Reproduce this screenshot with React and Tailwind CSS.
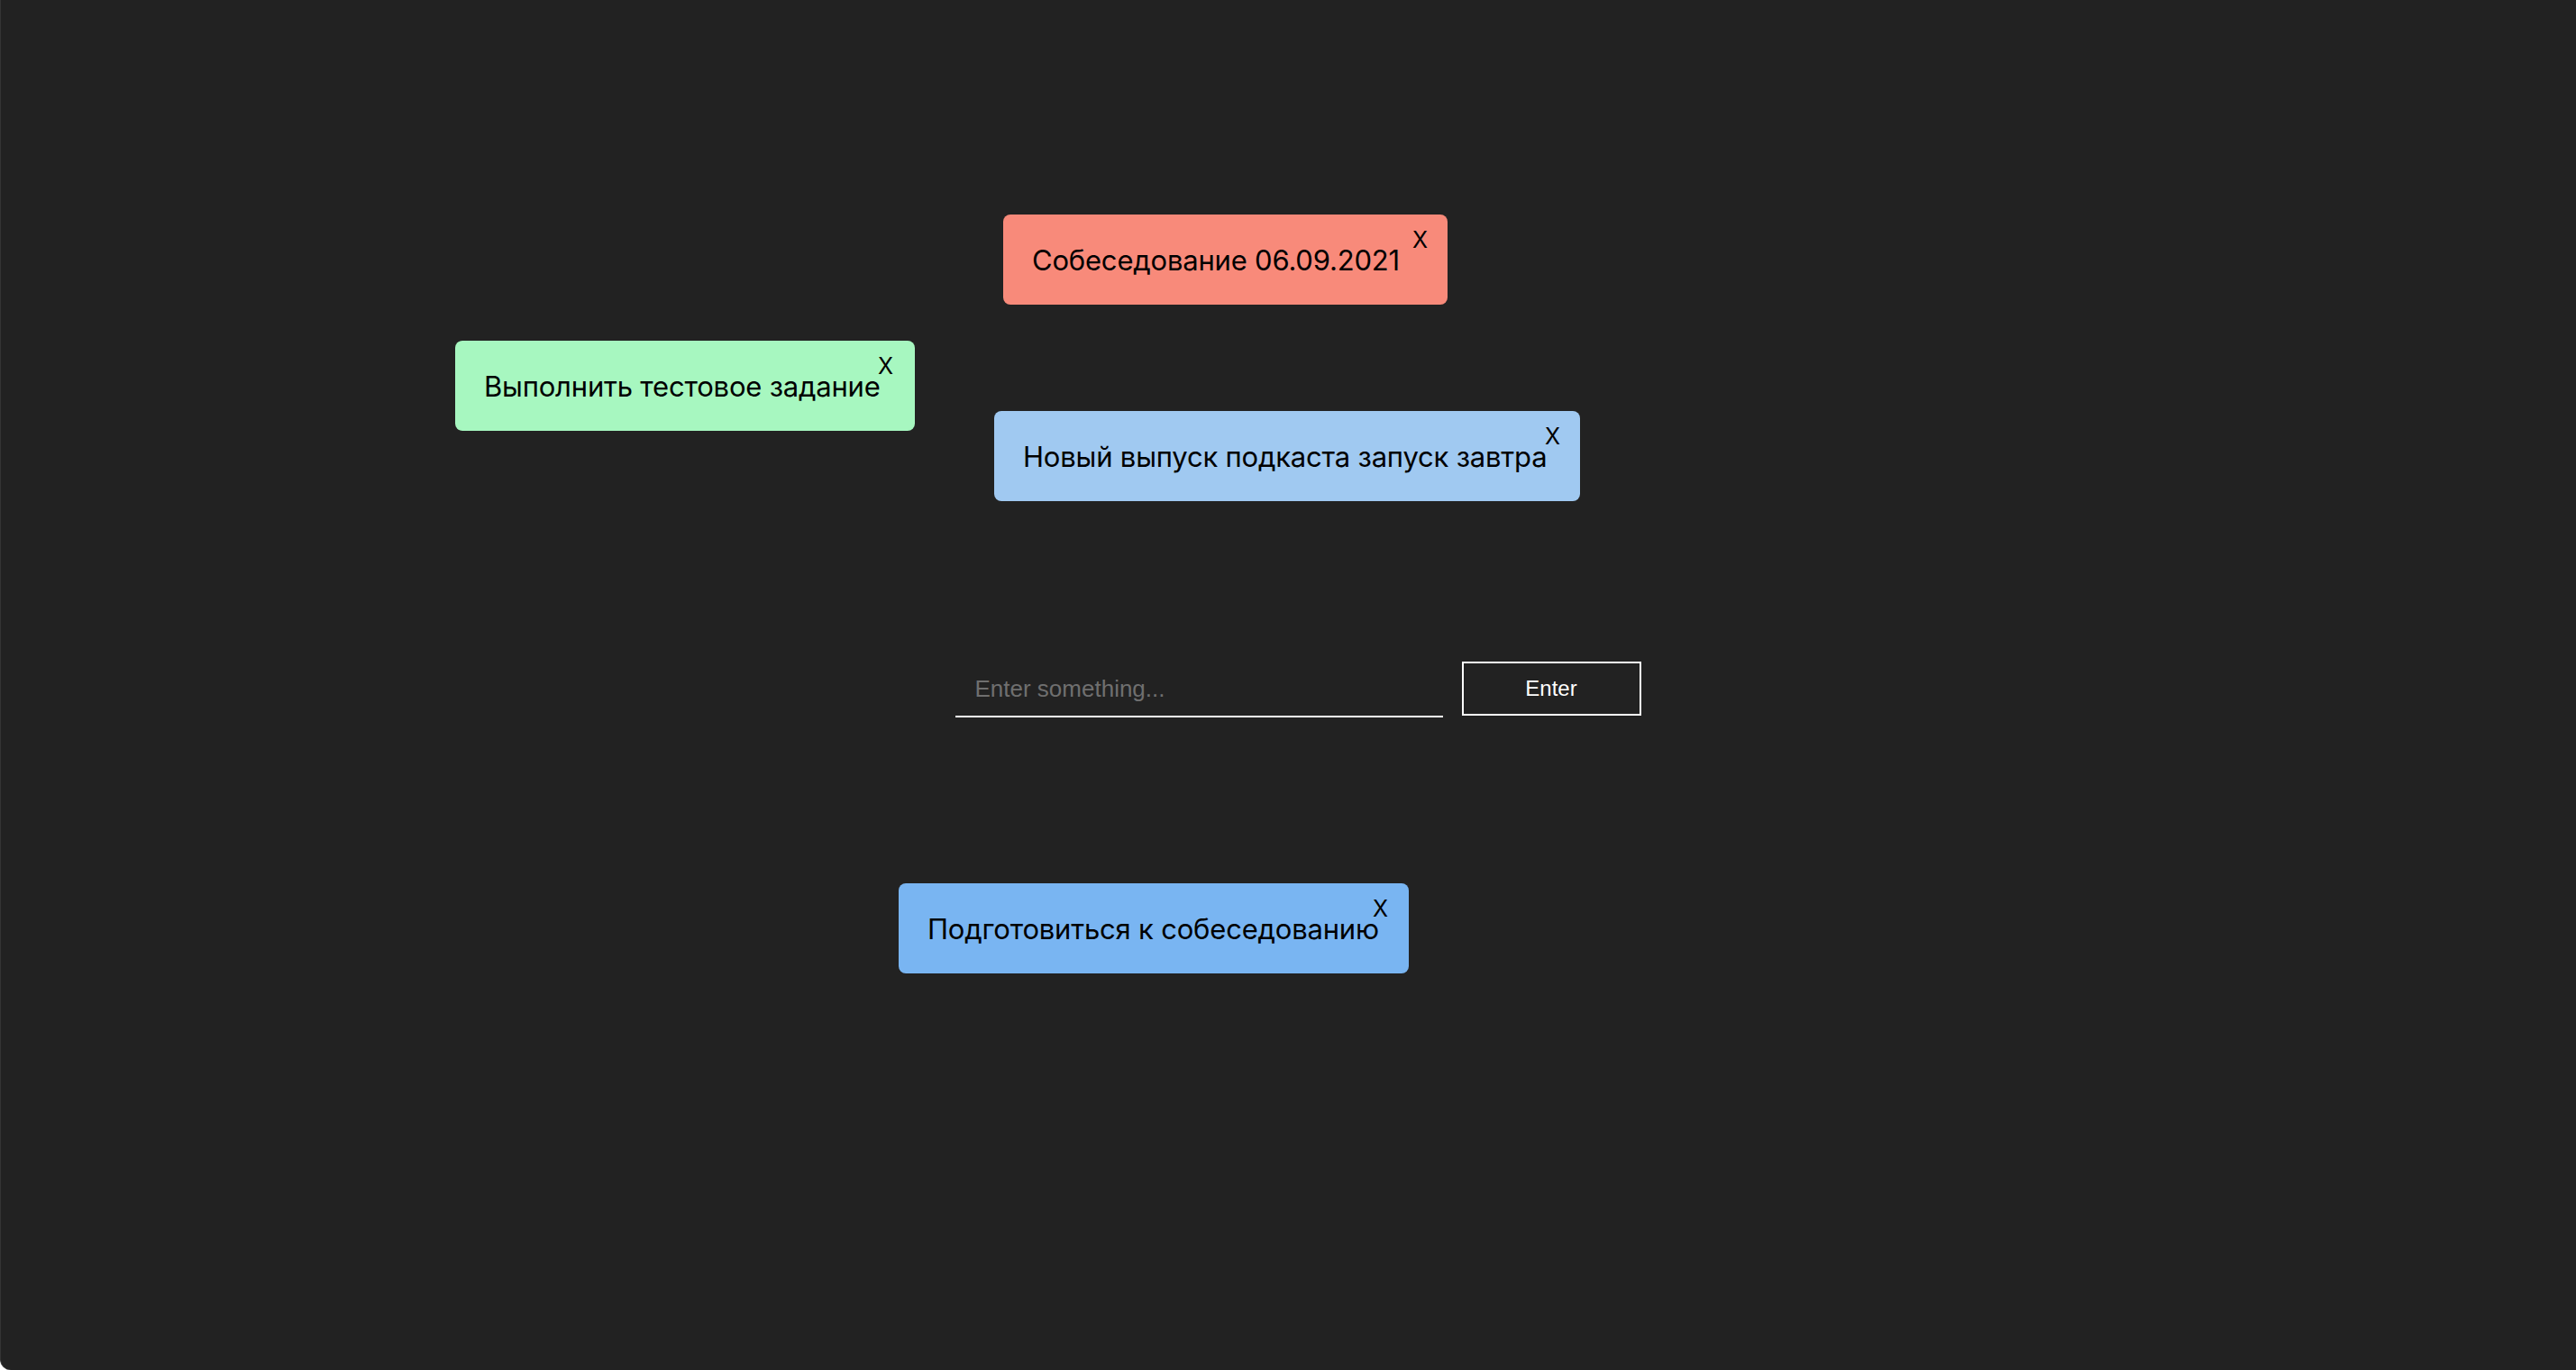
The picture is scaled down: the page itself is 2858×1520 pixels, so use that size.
import { useState } from "react";

const initialNotes = [
  { id: 1, text: "Собеседование 06.09.2021", color: "bg-[#f88a7a]", pos: "left-[1112px] top-[238px] w-[493px]", x: "right-[22px]" },
  { id: 2, text: "Выполнить тестовое задание", color: "bg-[#a7f7c0]", pos: "left-[504px] top-[378px] w-[510px]", x: "right-[24px]" },
  { id: 3, text: "Новый выпуск подкаста запуск завтра", color: "bg-[#a0c9f1]", pos: "left-[1102px] top-[456px] w-[650px]", x: "right-[22px]" },
  { id: 4, text: "Подготовиться к собеседованию", color: "bg-[#79b5f2]", pos: "left-[996px] top-[980px] w-[566px]", x: "right-[23px]" },
];

const Note = ({ note, onRemove }) => (
  <div className={`absolute flex h-[100px] items-center rounded-lg pl-8 pt-[3px] text-[31px] text-black ${note.color} ${note.pos}`}>
    <span className="whitespace-nowrap tracking-[-0.2px]">{note.text}</span>
    <button
      type="button"
      onClick={() => onRemove(note.id)}
      className={`absolute top-[16px] text-[25px] leading-none text-black ${note.x}`}
    >
      X
    </button>
  </div>
);

const App = () => {
  const [notes, setNotes] = useState(initialNotes);
  const [value, setValue] = useState("");

  const removeNote = (id) => setNotes((prev) => prev.filter((n) => n.id !== id));

  return (
    <div className="relative h-screen min-h-[1520px] w-full overflow-hidden rounded-bl-xl border-l border-[#343434] bg-[#222222] font-['Inter','Noto_Sans',sans-serif]">
      {notes.map((note) => (
        <Note key={note.id} note={note} onRemove={removeNote} />
      ))}

      <div className="flex justify-center pl-[21px] pt-[734px]">
        <div className="flex items-start gap-[21px] font-['Liberation_Sans',Arial,sans-serif]">
          <input
            value={value}
            onChange={(e) => setValue(e.target.value)}
            placeholder="Enter something..."
            className="h-[62px] w-[541px] border-b-2 border-white bg-transparent px-[22px] text-[26px] text-white outline-none placeholder:text-[#6f6f6f]"
          />
          <button
            type="button"
            className="h-[60px] w-[199px] border-2 border-white bg-transparent text-[24px] text-white"
          >
            Enter
          </button>
        </div>
      </div>
    </div>
  );
};

export default App;
